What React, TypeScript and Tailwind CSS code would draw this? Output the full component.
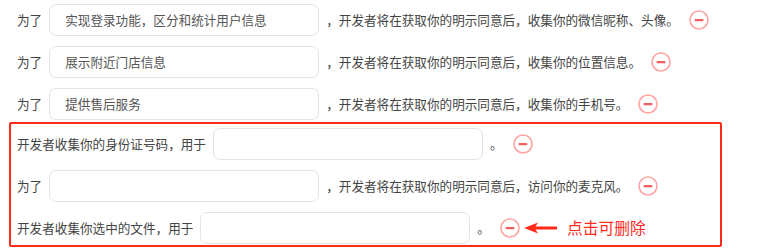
const font = { fontFamily: '"Noto Sans CJK SC", "Noto Sans", sans-serif' }

type Row = {
  before: string
  value: string
  after: string
}

const plainRows: Row[] = [
  { before: '为了', value: '实现登录功能，区分和统计用户信息', after: '，开发者将在获取你的明示同意后，收集你的微信昵称、头像。' },
  { before: '为了', value: '展示附近门店信息', after: '，开发者将在获取你的明示同意后，收集你的位置信息。' },
  { before: '为了', value: '提供售后服务', after: '，开发者将在获取你的明示同意后，收集你的手机号。' },
]

const boxedRows: Row[] = [
  { before: '开发者收集你的身份证号码，用于', value: '', after: '。' },
  { before: '为了', value: '', after: '，开发者将在获取你的明示同意后，访问你的麦克风。' },
  { before: '开发者收集你选中的文件，用于', value: '', after: '。' },
]

function MinusIcon() {
  return (
    <svg width="20" height="20" viewBox="0 0 20 20" className="shrink-0">
      <circle cx="10" cy="10" r="9" fill="none" stroke="#ffa3a3" strokeWidth="1.6" />
      <rect x="5.5" y="9" width="9" height="2.2" rx="1" fill="#f35d5d" />
    </svg>
  )
}

function Arrow() {
  return (
    <svg width="33" height="12" viewBox="0 0 33 12" className="shrink-0">
      <path d="M0 6 L14 0.5 L11.5 4.6 L33 4.6 L33 7.4 L11.5 7.4 L14 11.5 Z" fill="#ff2a1a" />
    </svg>
  )
}

function FormRow({ row, hint }: { row: Row; hint?: boolean }) {
  return (
    <div className="flex h-[32px] items-center text-[12.6px] text-[#444]">
      <span className="whitespace-nowrap">{row.before}</span>
      <div className="ml-[7px] flex h-[32px] w-[270px] shrink-0 items-center rounded-[7px] border border-[#e4e4e4] pl-[15px] text-[#555]">
        {row.value}
      </div>
      <span className="ml-[7px] whitespace-nowrap">{row.after}</span>
      <span className="ml-[10px] flex items-center">
        <MinusIcon />
      </span>
      {hint && (
        <span className="ml-[4px] flex items-center">
          <Arrow />
          <span className="ml-[10px] text-[15.8px] text-[#ff2a1a]">点击可删除</span>
        </span>
      )}
    </div>
  )
}

export default function App() {
  return (
    <div className="h-[250px] w-[774px] overflow-hidden bg-white pt-[4px]" style={font}>
      <div className="flex flex-col gap-[10px] pl-[17px]">
        {plainRows.map((row, i) => (
          <FormRow key={i} row={row} />
        ))}
      </div>
      <div className="ml-[9px] mt-[2px] w-[713px] rounded-[2px] border-2 border-[#ff2a1a] pb-[1px] pl-[6px] pt-[4px]">
        <div className="flex flex-col gap-[10px]">
          {boxedRows.map((row, i) => (
            <FormRow key={i} row={row} hint={i === 2} />
          ))}
        </div>
      </div>
    </div>
  )
}
